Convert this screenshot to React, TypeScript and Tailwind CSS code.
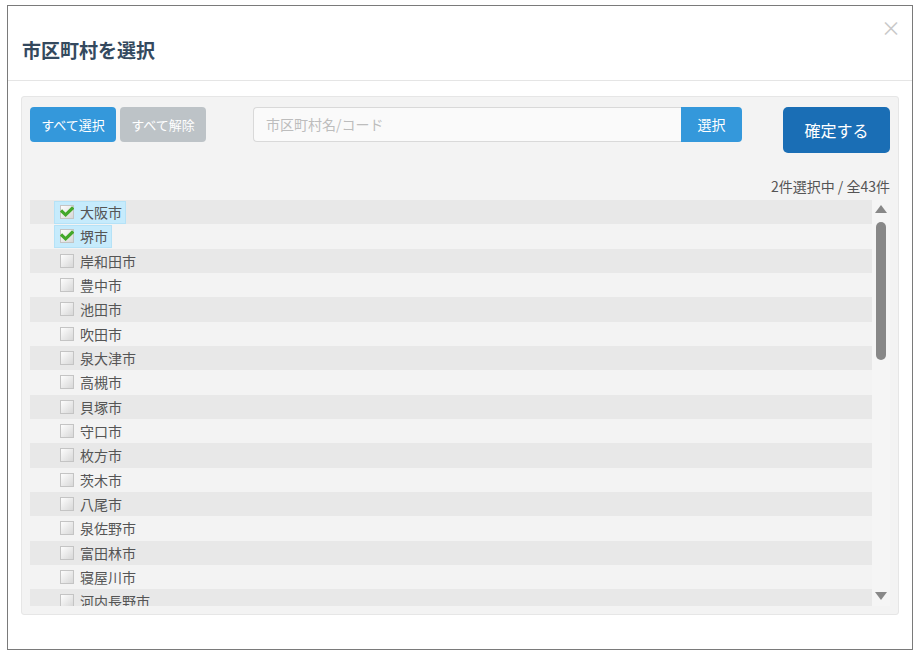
import React from "react";

const cities = [
  "大阪市", "堺市", "岸和田市", "豊中市", "池田市", "吹田市", "泉大津市", "高槻市", "貝塚市",
  "守口市", "枚方市", "茨木市", "八尾市", "泉佐野市", "富田林市", "寝屋川市", "河内長野市",
];
const selected = new Set(["大阪市", "堺市"]);

function Check({ on }: { on: boolean }) {
  return (
    <svg width="14" height="14" viewBox="0 0 14 14" className="shrink-0">
      <defs>
        <linearGradient id="gbox" x1="0" y1="0" x2="1" y2="1">
          <stop offset="0" stopColor="#ffffff" />
          <stop offset="1" stopColor="#d6d6d6" />
        </linearGradient>
      </defs>
      <rect x="0.5" y="0.5" width="13" height="13" fill="url(#gbox)" stroke="#c4c4c4" />
      {on && (
        <path d="M2.2 6.6 L5.6 9.8 L12 3.6" fill="none" stroke="#43a82a" strokeWidth="3.2" strokeLinejoin="miter" strokeLinecap="square" />
      )}
    </svg>
  );
}

export default function App() {
  return (
    <div className="w-[923px] h-[656px] bg-white pt-[5px] pl-[7px]" style={{ fontFamily: '"Noto Sans CJK JP", "Noto Sans", sans-serif' }}>
      <div className="w-[906px] h-[645px] border border-[#7a7a7a] bg-white relative">
        <div className="h-[75px] border-b border-[#e5e5e5] flex items-center pl-[14px] pt-[12px]">
          <h1 className="text-[19px] font-bold text-[#34495e] leading-none">市区町村を選択</h1>
        </div>
        <div className="absolute right-[11px] top-[12px] text-[#c8c8c8] text-[20px] leading-none">×</div>
        <div className="px-[13px] pt-[15px]">
          <div className="h-[519px] bg-[#f3f3f3] border border-[#e6e6e6] rounded-[3px] pt-[10px] pl-[8px] pr-[8px]">
            <div className="flex items-start">
              <button className="h-[35px] w-[86px] bg-[#3498db] text-white text-[13px] rounded-[4px]">すべて選択</button>
              <button className="h-[35px] w-[86px] ml-[4px] bg-[#bdc3c7] text-white text-[13px] rounded-[4px]">すべて解除</button>
              <div className="ml-[47px] flex h-[35px]">
                <div className="w-[428px] h-full bg-[#fafafa] border border-[#d9d9d9] border-r-0 rounded-l-[4px] flex items-center pl-[12px] text-[14px] text-[#bdbdbd]">市区町村名/コード</div>
                <button className="w-[61px] h-full bg-[#3498db] text-white text-[14px] rounded-r-[4px]">選択</button>
              </div>
              <button className="ml-auto h-[46px] w-[107px] bg-[#1a6eb5] text-white text-[16px] rounded-[5px]">確定する</button>
            </div>
            <div className="text-right text-[14px] text-[#555] mt-[26px] leading-none">2件選択中 / 全43件</div>
            <div className="flex mt-[7px]">
              <div className="w-[842px] h-[406px] overflow-hidden">
                {cities.map((c, i) => {
                  const on = selected.has(c);
                  return (
                    <div key={c} className={`h-[24.33px] flex items-center pl-[24px] ${i % 2 === 0 ? "bg-[#e8e8e8]" : "bg-[#f3f3f3]"}`}>
                      <div className={`flex items-center h-[23px] gap-[6px] ${on ? "bg-[#c6ebfc] border border-[#b5e2f7] pl-[5px] pr-[3px]" : "pl-[6px] pr-[4px]"}`}>
                        <Check on={on} />
                        <span className="text-[14px] text-[#555] leading-none">{c}</span>
                      </div>
                    </div>
                  );
                })}
              </div>
              <div className="w-[18px] h-[406px] bg-[#f5f5f5] flex flex-col items-center relative">
                <svg width="12" height="8" viewBox="0 0 12 8" className="mt-[5px]"><path d="M6 0 L12 8 L0 8 Z" fill="#888" /></svg>
                <div className="w-[10px] h-[138px] bg-[#888] rounded-full mt-[9px]" />
                <svg width="12" height="8" viewBox="0 0 12 8" className="absolute bottom-[6px]"><path d="M0 0 L12 0 L6 8 Z" fill="#888" /></svg>
              </div>
            </div>
          </div>
        </div>
      </div>
    </div>
  );
}
